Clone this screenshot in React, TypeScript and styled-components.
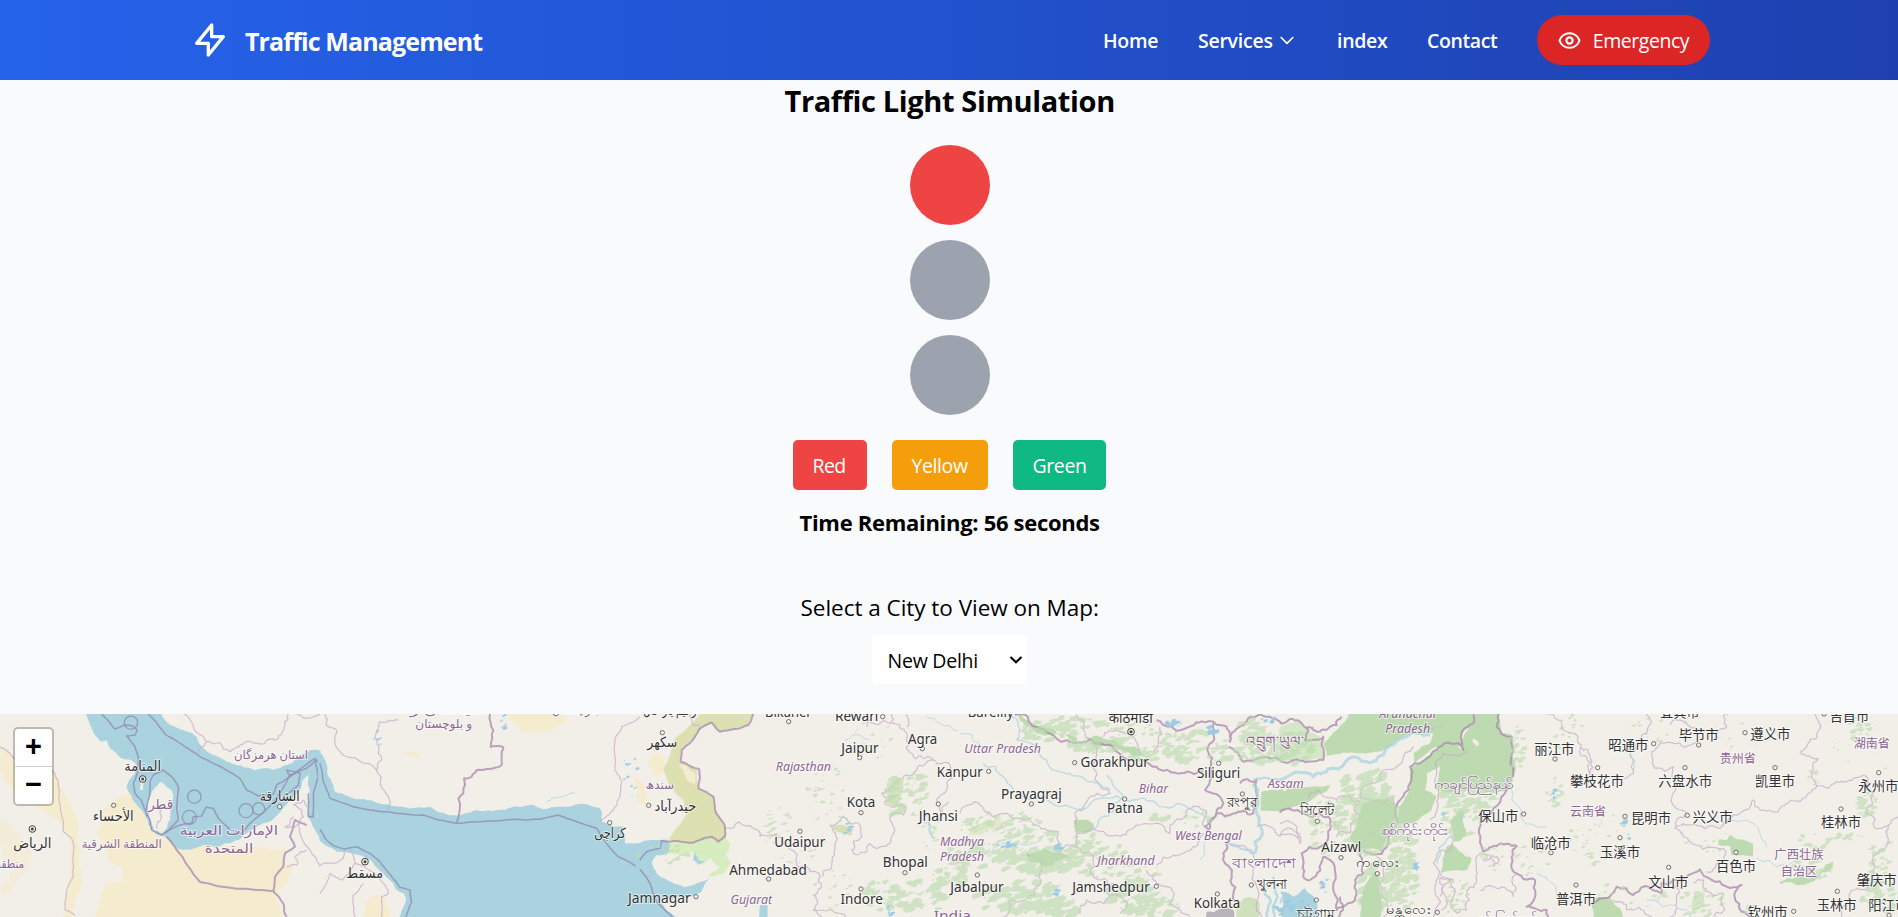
import React from "react";
import styled, { createGlobalStyle } from "styled-components";

const GlobalStyle = createGlobalStyle`
  *, *::before, *::after { box-sizing: border-box; }
  html { font-size: 20px; }
  body {
    margin: 0;
    height: 917px;
    overflow: hidden;
    background: #f9fafc;
    color: #000;
    font-family: "Open Sans", "Noto Sans", sans-serif;
  }
  h1, h2, p { margin: 0; }
`;

/* ---------- layout ---------- */

const Page = styled.div`
  display: flex;
  flex-direction: column;
  height: 917px;
`;

const Header = styled.header`
  height: 80px;
  flex: none;
  background: linear-gradient(to right, #2563eb, #1e40af);
  color: #fff;
`;

const HeaderInner = styled.div`
  width: 1600px;
  height: 100%;
  margin: 0 auto;
  padding: 0 39px 0 41px;
  display: flex;
  align-items: center;
  justify-content: space-between;
`;

const Brand = styled.div`
  display: flex;
  align-items: center;
  gap: 15px;
`;

const Fit = styled.span<{ $w: number; $ls: number }>`
  display: inline-block;
  width: ${(p) => p.$w}px;
  letter-spacing: ${(p) => p.$ls}px;
  white-space: nowrap;
`;

const BrandName = styled.h1`
  font-size: 25px;
  line-height: 35px;
  font-weight: 700;
  padding-top: 3px;
`;

const Nav = styled.nav`
  display: flex;
  align-items: center;
  gap: 40px;
`;

const NavLink = styled.a`
  display: flex;
  align-items: center;
  gap: 5px;
  font-size: 19.5px;
  line-height: 30px;
  font-weight: 600;
  color: #fff;

  span { padding-top: 2px; }
`;

const EmergencyButton = styled.button`
  display: flex;
  align-items: center;
  gap: 10px;
  height: 50px;
  padding: 0 20px;
  border: 0;
  border-radius: 25px;
  background: #dc2626;
  color: #fff;
  font: 400 19.5px/30px "Open Sans", sans-serif;

  span { padding-top: 2px; }
`;

const Main = styled.main`
  flex: 1;
  display: flex;
  flex-direction: column;
  align-items: center;
`;

const Title = styled.h2`
  margin-top: 1px;
  font-size: 29px;
  line-height: 40px;
  font-weight: 700;
`;

const Lights = styled.div`
  display: flex;
  flex-direction: column;
  gap: 15px;
  margin: 24px 0 25px;
  padding-left: 2px;
`;

const Light = styled.div<{ $color: string }>`
  width: 80px;
  height: 80px;
  border-radius: 50%;
  background: ${(p) => p.$color};
`;

const Buttons = styled.div`
  display: flex;
  gap: 25px;
`;

const ColorButton = styled.button<{ $color: string }>`
  height: 50px;
  padding: 2px 20px 0;
  border: 0;
  border-radius: 5px;
  background: ${(p) => p.$color};
  color: #fff;
  font: 400 19.5px/30px "Open Sans", sans-serif;
  text-align: left;
`;

const Timer = styled.p`
  margin-top: 15px;
  font-size: 22px;
  line-height: 35px;
  font-weight: 700;
`;

const CityLabel = styled.label`
  margin-top: 50px;
  font-size: 22.5px;
  line-height: 35px;
  font-weight: 500;
`;

const SelectBox = styled.div`
  position: relative;
  margin-top: 10px;
  width: 155px;
  height: 49px;
`;

const CitySelect = styled.select`
  appearance: none;
  width: 100%;
  height: 100%;
  padding: 2px 0 0 16px;
  border: 0;
  border-radius: 5px;
  background: #fff;
  color: #000;
  font: 400 19.5px "Open Sans", sans-serif;
  letter-spacing: -0.25px;
`;

const SelectArrow = styled.svg`
  position: absolute;
  right: 4px;
  top: 20px;
  pointer-events: none;
`;

const MapFrame = styled.section`
  position: relative;
  width: 100%;
  height: 203px;
  margin-top: auto;
  overflow: hidden;
  background: #f2efe9;
`;

const MapSvg = styled.svg`
  display: block;
`;

const ZoomControl = styled.div`
  position: absolute;
  left: 13px;
  top: 13px;
  width: 41px;
  height: 79px;
  display: flex;
  flex-direction: column;
  border: 2px solid rgba(0, 0, 0, 0.22);
  border-radius: 5px;
  background: #fff;
  background-clip: padding-box;
`;

const ZoomButton = styled.button`
  height: 37px;
  padding: 3px 0 0;
  border: 0;
  background: transparent;
  font: 700 29px/34px "Liberation Mono", monospace;
  color: #000;
  & + & { height: 38px; border-top: 1px solid #ccc; padding-top: 2px; }
`;

/* ---------- icons ---------- */

const Icon = ({ size, children }: { size: number; children: React.ReactNode }) => (
  <svg width={size} height={size} viewBox="0 0 24 24" fill="none" stroke="currentColor" strokeWidth={2} strokeLinecap="round" strokeLinejoin="round">
    {children}
  </svg>
);

/* ---------- map geometry (three units per pixel) ---------- */

type Pt = [number, number];

const random = (seed: number) => {
  let s = seed;
  return () => {
    s = (s * 16807) % 2147483647;
    return s / 2147483647;
  };
};

const parse = (s: string): Pt[] => s.trim().split(/\s+/).map((p) => p.split(",").map(Number) as Pt);

/* Fractal midpoint displacement turns a coarse polyline into a natural border. */
const rough = (src: string, amp: number, closed = false) => {
  let pts = parse(src);
  if (closed) pts = [...pts, pts[0]];
  const rnd = random(Math.round(Math.abs(pts[0][0] * 31 + pts[0][1] * 17) + pts.length * 101) + 7);
  for (let step = 0; step < 3; step++) {
    const next: Pt[] = [];
    for (let i = 0; i < pts.length - 1; i++) {
      const [x1, y1] = pts[i];
      const [x2, y2] = pts[i + 1];
      const len = Math.hypot(x2 - x1, y2 - y1);
      next.push(pts[i]);
      if (len > 9) {
        const d = (rnd() - 0.5) * len * amp;
        next.push([(x1 + x2) / 2 - ((y2 - y1) / len) * d, (y1 + y2) / 2 + ((x2 - x1) / len) * d]);
      }
    }
    next.push(pts[pts.length - 1]);
    pts = next;
  }
  return "M" + pts.map((p) => p[0].toFixed(1) + " " + p[1].toFixed(1)).join("L") + (closed ? "Z" : "");
};

const WATER = "#aad3df";
const GREEN = "#bddab1";
const SAND = "#f5ecd0";
const LAND = "#f2efe9";

const Area = ({ d, fill, amp = 0.3 }: { d: string; fill: string; amp?: number }) => <path d={rough(d, amp, true)} fill={fill} />;

const Border = ({ d, major, amp = 0.5 }: { d: string; major?: boolean; amp?: number }) => (
  <path d={rough(d, amp)} fill="none" stroke={major ? "#ad8fae" : "#c5adc8"} strokeOpacity={major ? 0.8 : 0.75} strokeWidth={major ? 6 : 3.6} strokeLinejoin="round" />
);

const SeaLine = ({ d }: { d: string }) => <path d={rough(d, 0.06)} fill="none" stroke="#9391b3" strokeWidth={4.5} strokeOpacity={0.85} strokeLinejoin="round" />;

const River = ({ d, w = 3 }: { d: string; w?: number }) => <path d={rough(d, 0.4)} fill="none" stroke={WATER} strokeWidth={w} strokeOpacity={0.75} />;

/* Small patches of woodland scattered inside an ellipse: cx, cy, rx, ry, count, size. */
type Patch = [number, number, number, number, number, number];

const scatter = ([cx, cy, rx, ry, n, size]: Patch) => {
  const rnd = random(cx * 13 + cy * 7 + n);
  let d = "";
  for (let i = 0; i < n; i++) {
    const a = rnd() * Math.PI * 2;
    const r = Math.sqrt(rnd());
    const x = cx + Math.cos(a) * r * rx;
    const y = cy + Math.sin(a) * r * ry;
    const s = size * (0.25 + rnd() * 0.9);
    for (let k = 0; k < 8; k++) {
      const t = (k / 8) * Math.PI * 2;
      const q = s * (0.4 + rnd() * 0.8);
      const px = x + Math.cos(t) * q * 1.5 + Math.sin(t) * q * 0.3;
      const py = y + Math.sin(t) * q * 0.75 - Math.cos(t) * q * 0.5;
      d += (k ? "L" : "M") + px.toFixed(1) + " " + py.toFixed(1);
    }
    d += "Z";
  }
  return d;
};

const woods: Patch[] = [
  [2480, 260, 60, 110, 40, 5], [2330, 350, 50, 60, 35, 6], [2620, 90, 60, 60, 25, 6], [2690, 260, 30, 60, 22, 12],
  [2750, 250, 35, 70, 40, 9], [2800, 370, 40, 60, 16, 6], [2400, 440, 60, 40, 16, 5], [2500, 540, 60, 60, 20, 5],
  [2650, 560, 70, 50, 35, 9], [2760, 560, 90, 45, 50, 13], [2850, 500, 60, 30, 30, 12], [2950, 430, 120, 40, 50, 12],
  [2940, 340, 80, 30, 36, 9], [3060, 340, 60, 30, 28, 8], [3080, 400, 110, 50, 50, 11], [3120, 450, 130, 40, 60, 17], [3060, 560, 130, 50, 70, 15],
  [3190, 590, 80, 30, 40, 15], [3260, 400, 50, 60, 30, 11], [3300, 450, 90, 60, 40, 10], [3400, 560, 80, 50, 50, 14], [3470, 590, 70, 30, 30, 13],
  [3420, 480, 60, 40, 24, 9], [3590, 320, 50, 30, 18, 7], [3480, 320, 25, 12, 10, 12], [3150, 60, 90, 30, 40, 12],
  [3300, 105, 90, 25, 40, 13], [3440, 130, 80, 22, 34, 11], [3580, 105, 110, 45, 60, 10], [3240, 40, 90, 20, 28, 10],
  [3400, 70, 90, 30, 30, 8], [3780, 110, 70, 50, 60, 12], [3880, 110, 60, 50, 60, 12], [3620, 150, 90, 18, 20, 10], [3750, 55, 40, 35, 30, 10],
  [3990, 380, 60, 60, 30, 8], [3980, 310, 60, 50, 34, 10], [4100, 240, 80, 60, 50, 16], [4130, 320, 80, 60, 60, 20], [4100, 390, 60, 50, 40, 17],
  [4120, 540, 40, 90, 50, 15], [4200, 450, 40, 120, 60, 14], [4200, 520, 50, 90, 50, 11], [4390, 320, 60, 60, 40, 12], [4370, 560, 40, 60, 24, 8],
  [4410, 250, 80, 60, 40, 15], [4550, 120, 25, 80, 30, 9], [4665, 245, 25, 45, 24, 7], [4710, 70, 50, 60, 24, 5], [4600, 440, 60, 60, 20, 6],
  [4480, 440, 40, 40, 20, 6], [4740, 390, 50, 60, 14, 6], [4800, 440, 60, 40, 12, 7], [4980, 60, 90, 50, 16, 5], [4840, 350, 60, 50, 14, 5],
  [5220, 60, 140, 60, 22, 4], [5120, 380, 80, 50, 14, 5], [5450, 390, 60, 30, 16, 8], [5550, 380, 40, 12, 12, 9], [5600, 280, 30, 40, 30, 9],
  [5430, 480, 70, 30, 26, 9], [5650, 460, 40, 80, 30, 9], [5640, 560, 60, 50, 40, 11], [5580, 60, 30, 50, 22, 9], [5440, 190, 20, 40, 14, 5],
  [4870, 560, 130, 40, 20, 7], [5100, 580, 70, 40, 22, 8], [5260, 600, 30, 20, 10, 8], [5590, 150, 110, 90, 14, 4], [2000, 430, 90, 30, 22, 8],
];

const lakes: Patch[] = [
  [3520, 40, 30, 10, 12, 9], [3640, 60, 16, 16, 9, 8], [3805, 30, 25, 8, 8, 8], [3020, 405, 30, 8, 10, 7], [3175, 410, 15, 12, 8, 7],
  [3170, 545, 12, 12, 6, 7], [2670, 595, 12, 22, 7, 6], [2550, 360, 14, 24, 8, 7], [3975, 525, 12, 25, 8, 6], [4250, 470, 5, 12, 5, 8],
  [4330, 305, 4, 12, 4, 6], [4120, 365, 3, 8, 3, 5], [4662, 248, 4, 18, 5, 6], [4873, 340, 4, 10, 5, 7], [4890, 375, 4, 14, 5, 6],
  [1500, 34, 30, 24, 5, 6], [1135, 90, 14, 26, 6, 5], [1890, 180, 25, 90, 9, 7], [4300, 50, 30, 8, 6, 6], [3870, 590, 50, 25, 20, 9],
];

const Terrain = () => (
  <>
    <g id="gulf">
      <Area fill={SAND} d="0,110 50,155 165,190 195,250 235,330 240,420 245,500 230,560 220,640 190,640 212,500 215,400 180,340 130,300 50,250 0,180" amp={0.2} />
      <Area fill={SAND} d="340,275 385,250 420,290 445,345 490,385 525,412 610,405 700,410 840,420 860,410 850,460 880,470 860,520 830,545 850,680 280,680 300,570 320,515 365,515 365,470 330,460 290,370 310,300" amp={0.12} />
      <Area fill="#f3ecd8" d="0,330 60,370 100,440 60,500 10,560 0,540 40,470 0,400" />
      <Area
        fill={WATER}
        d="240,-20 258,12 270,45 285,75 302,95 320,90 328,112 347,127 365,145 400,155 415,175 402,195 387,210 380,230 395,260 415,290 432,312 445,345 465,370 490,378 510,395 525,412 570,420 610,405 650,412 700,395 740,370 780,345 830,318 845,300 870,272 900,240 905,215 925,195 930,240 925,280 925,320 945,360 962,385 962,122 930,120 900,135 860,165 820,180 760,180 710,165 680,155 640,135 605,110 590,80 550,60 510,45 485,12 475,-20"
        amp={0.18}
      />
      <Area fill={LAND} d="468,230 485,215 500,230 516,242 514,290 510,330 500,355 485,370 462,360 450,330 443,300 445,270 455,245" amp={0.2} />
      <Area fill={LAND} d="418,212 431,220 430,240 420,238" />
      <Area fill={LAND} d="760,160 800,152 835,160 800,172" />
      <g fill="none" stroke="#9391b3" strokeWidth={4} strokeOpacity={0.85}>
        <circle cx="393" cy="38" r="20" />
        <circle cx="583" cy="260" r="20" />
        <circle cx="568" cy="322" r="21" />
        <circle cx="738" cy="302" r="21" />
        <circle cx="776" cy="296" r="18" />
      </g>
      <SeaLine d="305,12 345,57 372,45 400,48 412,60 405,75 380,78 405,110 415,140 412,190 400,220 405,250 425,272 435,300 450,330 455,360 485,375 505,362 540,345 575,340 580,320 605,318 618,292 640,295 655,325 690,360 725,370 750,340 790,308 830,265 870,195 920,175 948,150" />
      <SeaLine d="445,12 495,72 540,100 600,140 640,160 720,205 740,240 775,258 820,252 830,225 870,200 910,170 945,145 962,165" />
      <SeaLine d="450,215 460,195 490,180 520,205 535,230 530,300 535,330 495,370" />
      <SeaLine d="450,215 448,260 440,290 440,320" />
      <SeaLine d="870,200 860,180 900,190 895,225 850,260" />
      <SeaLine d="945,150 955,200 940,250 940,320 925,320 925,250" />
      <Border major d="500,380 530,420 600,516 820,544 825,500 850,470 855,430 885,410 870,380 885,330 920,345" amp={0.08} />
      <Border major d="820,544 850,580 860,621" amp={0.2} />
      <Border d="0,112 40,145 165,190 175,230 185,315 190,365 215,385 220,500 195,600 225,615" amp={0.2} />
      <Border d="550,12 580,50 620,95 595,130" amp={0.3} />
      <Border d="620,95 690,125 720,105 800,90 835,85 850,60 865,12" />
      <Border d="880,320 855,350 900,340 905,300 880,285 910,270 925,295" />
      <Border d="895,340 900,370 930,420 960,470" amp={0.2} />
      <Border d="860,470 890,465 885,440 920,420" />
      <Border d="470,290 485,320 470,355" />
      <Border d="890,12 915,25 960,12" amp={0.2} />
    </g>
    <g id="arabian-sea" transform="translate(960)">
      <Area fill={SAND} d="560,-10 745,-10 745,12 735,40 690,62 640,70 600,60 565,25" amp={0.15} />
      <Area fill={SAND} d="258,125 300,132 300,145 262,136" />
      <Area
        fill={WATER}
        d="-2,125 15,150 22,190 40,225 45,245 90,262 110,268 150,270 185,282 240,290 300,292 330,290 385,315 430,312 470,300 530,300 580,290 640,285 680,297 740,290 800,283 840,295 845,335 870,345 910,350 915,400 962,400 1000,800 238,800 238,621 250,590 258,570 250,550 225,535 215,515 190,490 160,460 130,440 90,430 50,425 15,405 -2,390 -2,300 -2,210"
        amp={0.18}
      />
      <path d="M-6 140H4V375H-6ZM940 412H970V640H940Z" fill={WATER} />
      <Area fill={SAND} d="160,555 190,560 210,600 212,640 130,640 140,575" amp={0.2} />
      <Area fill={SAND} d="945,200 960,215 960,280 950,250" />
      <SeaLine d="0,160 10,215 30,265 100,290 200,305 310,315 405,340 480,335 530,333 660,328 712,315 830,355 855,395 895,440 948,468 962,450" />
      <SeaLine d="0,358 15,385 40,407 75,417 110,410 150,430 180,455 215,500 240,532 270,540 275,575 255,625" />
      <Border major d="510,12 512,110 550,112 545,165 470,180 455,200 432,205 430,250 415,265 408,338" amp={0.25} />
      <Border d="15,12 18,45 50,60 45,90 60,125 170,180 185,230 205,260 205,300" amp={0.3} />
      <Border d="170,180 185,150 178,110 180,35 235,30" amp={0.35} />
      <Border d="960,20 905,50 885,90 885,180 905,215 900,260 870,310 840,335" amp={0.2} />
      <Border d="0,465 40,460 70,445 75,420" amp={0.2} />
      <Border d="92,418 105,460 68,510 30,490 0,550" amp={0.15} />
      <Border d="105,460 190,520 205,550 185,560 185,621" amp={0.2} />
      <Border d="130,520 100,555 105,621" amp={0.15} />
      <River d="680,275 720,260 765,250" />
    </g>
    <g id="west-india" transform="translate(1920)">
      <Area fill={SAND} d="30,140 60,130 75,160 65,195 40,195 25,170" />
      <Area fill={SAND} d="0,215 15,240 20,280 0,285" />
      <Area fill="#d5edbf" d="70,392 250,378 270,400 258,432 272,455 250,492 200,505 240,472 210,445 190,462 165,450 160,425 110,432 80,430" amp={0.2} />
      <Area
        fill="#dde0b1"
        d="205,-10 345,-10 340,12 325,45 240,65 215,38 180,55 165,80 125,120 122,155 170,180 175,235 220,260 225,300 255,350 255,385 230,395 215,380 160,398 85,388 105,360 140,310 130,270 85,220 70,175 95,115 110,80 150,45"
        amp={0.12}
      />
      <Area fill={SAND} d="108,160 165,190 170,235 140,210" />
      <Area fill={WATER} d="-4,400 40,390 80,388 90,405 85,430 50,435 35,460 50,490 80,510 130,530 170,520 208,505 185,545 160,558 110,562 60,572 80,600 112,625 112,700 -20,700 -20,600 -10,500" amp={0.18} />
      <Area fill={WATER} d="360,585 385,588 380,640 355,640" amp={0.15} />
      <Area fill={WATER} d="160,430 175,450 195,455 175,465 160,450" />
      <SeaLine d="0,450 20,425 60,415 65,390" />
      <SeaLine d="0,478 30,520 50,575 100,625" />
      <Border major d="340,12 325,45 240,65 215,38 180,55 165,80 125,120 122,155 178,178 175,235 220,260 225,300 255,350 255,380 235,395 215,380 160,398 65,392" amp={0.12} />
      <Border d="180,50 150,12" />
      <Border d="255,355 340,355 390,375 420,380 455,420 470,465 510,485 540,500 545,530 520,555 520,600 545,621" amp={0.6} />
      <Border d="545,500 575,470 585,400 570,345 610,320 625,335 660,345 665,380 635,420 650,435 690,400 750,400 760,370 750,320 790,315 795,290 740,285 725,250 770,210 830,180 880,150 930,165" amp={0.5} />
      <Border d="680,50 690,30 750,40 755,12" amp={0.6} />
      <Border d="755,40 795,65 800,110 830,145 880,150" amp={0.6} />
      <Border d="800,12 800,50" />
      <Border d="930,165 920,240 890,270 905,310 925,275" amp={0.6} />
      <Border d="520,600 620,625" />
      <Area fill="#d5e2bd" d="740,270 760,220 790,205 785,250 765,290 745,290" />
      <Area fill="#d7dfb9" d="575,350 640,350 635,375 600,368" />
      <River d="860,20 900,40 955,65" />
      <River d="615,90 660,75 690,90" />
      <River d="865,330 870,370 885,385" w={6} />
    </g>
    <g id="gangetic-plain" transform="translate(2880)">
      <Area fill="#e2e8cb" d="20,375 60,340 120,320 130,345 70,370" />
      <Area fill={GREEN} d="345,330 400,340 395,365 350,365" />
      <Area fill={GREEN} d="200,428 300,425 330,445 260,470 210,455" />
      <Area fill={GREEN} d="165,12 200,30 260,55 350,80 350,95 270,75 190,40" />
      <Area fill={GREEN} d="385,85 450,90 520,110 560,140 500,125 420,110" />
      <Area fill={GREEN} d="905,245 970,238 970,305 900,300" amp={0.15} />
      <Area fill="#cfe0bd" d="830,580 870,560 900,580 890,640 820,640" />
      <Area fill="#b7b3bb" d="740,605 820,600 830,640 735,640" />
      <Border major d="165,15 230,50 295,90 350,98 385,90 450,105 510,150 590,170 650,190 710,190 730,185" amp={0.4} />
      <Border major d="590,30 610,45 690,50 730,35 760,35 800,50 810,95 840,50 870,20 930,20 962,40" amp={0.4} />
      <Border major d="760,40 745,110 755,180 735,240 790,280 770,300 735,350 745,360 770,310 820,310" amp={0.4} />
      <Border major d="805,110 850,155 962,150" amp={0.4} />
      <Border major d="820,310 880,310 890,250 890,210 840,220" amp={0.5} />
      <Border major d="805,390 790,430 815,490 825,575" amp={0.5} />
      <Border d="350,12 370,60 395,95 410,150 405,210 450,250 380,275 345,310 350,370 440,375 480,380 540,345 630,370 640,340 690,295 735,300 730,350" amp={0.5} />
      <Border d="0,310 60,285 100,320 180,325 230,345 295,365 295,425 350,410 350,370" amp={0.5} />
      <Border d="350,410 400,460 400,500 460,520 440,545 500,575 480,610" amp={0.6} />
      <Border d="200,430 245,480 230,530 150,570 130,621" amp={0.6} />
      <Border d="590,465 640,435 700,410 730,370" amp={0.6} />
      <Border d="560,480 590,520 640,560 640,590 690,621" amp={0.6} />
      <Border d="360,610 380,570 480,560" amp={0.6} />
      <Border d="800,400 880,430 890,530 905,621" amp={0.4} />
      <Border d="600,50 595,95 580,125" />
      <Border d="430,80 470,60 540,130" />
      <Border d="890,350 930,350 962,380" />
      <River d="0,70 60,105 80,125" />
      <River d="150,12 170,90 260,150 330,190 400,215 450,240" w={4} />
      <River d="70,160 130,200 200,265 300,290 420,265 520,270 600,290 700,300 735,320" w={4} />
      <River d="400,360 460,305 490,260 440,195" w={4} />
      <River d="880,220 890,310 885,430" w={9} />
      <River d="880,210 962,215" w={6} />
      <River d="800,400 840,415 885,430" w={6} />
      <River d="735,320 740,370 720,450" />
      <River d="250,375 130,400 90,430" />
      <River d="905,540 930,580 920,621" w={8} />
      <River d="940,500 945,621" w={8} />
    </g>
    <g id="eastern-hills" transform="translate(3840)">
      <Area fill={GREEN} d="210,-20 575,-20 580,40 545,70 545,110 470,110 400,165 400,130 450,100 460,70 380,75 340,100 300,125 240,130 140,137 130,100 170,60 205,20" amp={0.15} />
      <Area fill={GREEN} d="585,-20 655,-20 665,70 695,75 708,180 690,240 640,250 590,235 540,245 470,240 480,170 440,190 435,240 470,260 455,300 400,340 350,340 360,290 385,250 390,175 440,140 510,100 545,120 555,70" amp={0.15} />
      <Area fill={GREEN} d="-4,250 60,230 150,225 140,245 80,280 -4,305" amp={0.15} />
      <Area fill={GREEN} d="250,280 340,275 350,310 335,370 305,430 240,415 210,385 235,330" />
      <Area fill={GREEN} d="500,410 520,402 540,425 575,445 560,480 480,488" amp={0.2} />
      <Area fill={GREEN} d="520,320 550,300 555,380 525,395 515,360" />
      <Area fill={GREEN} d="265,510 295,480 300,640 235,640" amp={0.2} />
      <Area fill="#d5e8c5" d="0,50 60,35 85,60 120,80 130,145 0,150" amp={0.15} />
      <Area fill={WATER} d="0,545 40,560 75,535 110,580 120,640 0,640" amp={0.25} />
      <Area fill={LAND} d="580,85 598,102 590,110 578,95" />
      <Border major d="0,40 60,35 85,60 75,90 130,80 130,150 60,152 0,152" amp={0.35} />
      <Border major d="80,55 110,65 150,50 170,45 185,20" amp={0.5} />
      <Border major d="580,12 580,40 545,70 550,120 535,100 480,110 440,145 390,170 385,240 350,290 350,340 325,390 305,432 250,420" amp={0.3} />
      <Border major d="655,12 650,50 665,72 695,80 700,190 680,240 610,320 600,350 610,425" amp={0.3} />
      <Border major d="610,425 650,408 710,408 695,440 710,490 765,510 740,590 800,600 805,621" amp={0.4} />
      <Border major d="0,308 60,305 90,320 145,320 145,380 120,410 65,430 70,500 90,510 130,440 150,450 160,540 170,600 225,570 225,510 250,490 240,430" amp={0.4} />
      <Border d="400,110 310,180 300,210 240,265 280,275 340,265 350,290" amp={0.4} />
      <Border d="85,265 110,240 170,270 210,260 240,275 235,330 210,370 170,380 150,330" amp={0.6} />
      <Border d="560,125 490,130 470,180 465,220 475,260 465,320 450,330" amp={0.4} />
      <Border d="290,440 300,520 310,621" />
      <Border d="515,375 515,410 460,460 465,530 460,621" />
      <Border d="480,490 520,560 530,610 560,600 560,540 590,510 600,430" amp={0.6} />
      <Border d="480,560 520,510 480,505 485,600" amp={0.6} />
      <Border d="600,540 640,530 700,560 715,490" amp={0.6} />
      <Border d="0,340 45,345 60,400 0,375" />
      <Border d="0,375 40,360 60,385" />
      <Border d="800,12 850,60 880,70 900,130 930,155 930,190" amp={0.5} />
      <Border d="610,430 640,470 650,440 610,450" amp={0.7} />
      <Border d="180,560 175,621" major />
      <River d="0,210 100,200 160,175 260,155 310,135 380,80 450,75" w={9} />
      <River d="540,310 510,380 470,460" w={4} />
      <River d="640,240 690,210 720,320 760,345 800,350" />
      <River d="770,490 820,520 830,560" />
      <River d="0,580 20,555 40,600" w={6} />
    </g>
    <g id="south-china" transform="translate(4740)">
      <Area fill={GREEN} d="415,390 440,390 450,375 470,388 500,392 520,400 518,440 455,435 450,408 415,405" amp={0.15} />
      <Area fill={GREEN} d="45,565 90,565 120,595 130,640 40,640 35,590" amp={0.2} />
      <Area fill={GREEN} d="600,515 700,505 735,465 760,455 755,475 700,515 650,525 600,522" />
      <Area fill="#d2e5c5" d="340,545 375,550 370,590 335,605" />
      <Border major d="35,585 90,560 110,530 160,555 190,530 245,550 245,520 290,510 360,478 395,510 485,525 465,565 485,605 510,621" amp={0.35} />
      <Border d="200,12 205,50 185,75 150,120 160,190 130,205" amp={0.5} />
      <Border d="350,98 280,100 240,95 215,125 225,175 280,170 285,230 275,265 320,310 285,355 310,380 350,405 430,415 430,450 380,485" amp={0.45} />
      <Border d="290,350 330,345 420,355 480,310 520,270 540,300 595,305 635,270 680,260 710,230 745,235 800,215 860,200 875,245 855,310 885,325 885,355 925,345 925,385 880,460 860,540 810,550 785,620" amp={0.45} />
      <Border d="710,230 700,180 715,145 660,128 710,85 705,12" amp={0.5} />
      <Border d="925,345 954,320" />
      <Border d="270,45 300,30 330,50 380,60 440,50 435,12" amp={0.6} />
      <Border d="100,570 140,600 190,600 215,621" amp={0.6} />
      <Border d="280,520 290,580 270,621" amp={0.6} />
      <Border d="340,520 370,510 380,545 430,550 435,600 400,621" amp={0.6} />
      <Border d="0,112 30,145 30,200" amp={0.6} />
      <River d="200,570 250,590 320,600 330,621" />
      <River d="430,350 500,330 540,370 560,410" />
      <River d="530,445 590,470 700,475" />
      <River d="150,130 160,180" />
    </g>
  </>
);

type Kind = "city" | "state" | "region" | "country";
type Label = [string, number, number, number, Kind?];

const labels: Label[] = [
  ["المنامة", 428, 183, 110], ["الأحساء", 340, 333, 122], ["الرياض", 97, 413, 115],
  ["قطر", 482, 297, 75, "country"], ["منطقة", 30, 475, 85, "region"], ["المنطقة الشرقية", 365, 413, 240, "region"],
  ["استان هرمزگان", 813, 146, 222, "region"], ["الشارقة", 839, 273, 120], ["الإمارات العربية", 687, 374, 295, "country"], ["المتحدة", 687, 430, 145, "country"],
  ["سیستان و", 1345, 13, 230, "region"], ["و بلوچستان", 1331, 53, 170, "region"], ["بلوچستان", 1725, 12, 140, "region"],
  ["کراچی", 1830, 385, 95], ["مسقط", 1094, 505, 110], ["رحیم یار خان", 2010, 14, 160],
  ["سکھر", 1987, 112, 90], ["سندھ", 1980, 238, 85, "region"], ["حیدرآباد", 2026, 303, 125],
  ["Bikaner", 2365, 20, 140], ["Rewari", 2570, 32, 130], ["Jaipur", 2580, 128, 112], ["Agra", 2768, 102, 88], ["Rajasthan", 2410, 182, 165, "state"],
  ["Kanpur", 2879, 201, 138], ["Kota", 2583, 292, 86], ["Jhansi", 2815, 333, 118], ["Udaipur", 2399, 410, 153], ["Ahmedabad", 2304, 494, 233],
  ["Bhopal", 2716, 472, 135], ["Indore", 2585, 583, 127], ["Gujarat", 2254, 582, 125, "state"], ["Jamnagar", 1978, 578, 188],
  ["Madhya", 2886, 409, 132, "state"], ["Pradesh", 2886, 453, 132, "state"], ["Jabalpur", 2931, 546, 160], ["India", 2857, 634, 112, "country"],
  ["Bareilly", 2972, 20, 138], ["Uttar Pradesh", 3008, 130, 230, "state"], ["Gorakhpur", 3344, 172, 205], ["Prayagraj", 3094, 267, 182], ["Patna", 3375, 310, 108],
  ["Bihar", 3460, 249, 88, "state"], ["Siliguri", 3656, 205, 130], ["রংপুর", 3727, 292, 95], ["West Bengal", 3625, 390, 200, "state"],
  ["Jharkhand", 3378, 465, 172, "state"], ["Jamshedpur", 3333, 546, 233], ["Kolkata", 3651, 594, 140], ["বাংলাদেশ", 3792, 475, 190, "country"],
  ["খুলনা", 3817, 538, 90], ["काठमाडौं", 3392, 40, 132], ["नेपाल", 3210, 13, 84, "country"], ["འབྲུག་ཡུལ་", 3825, 108, 175, "country"], ["Assam", 3857, 235, 108, "state"],
  ["Arunachal", 4223, 25, 170, "state"], ["Pradesh", 4223, 70, 135, "state"], ["ကချင်ပြည်နယ်", 4420, 238, 235, "region"], ["সিলেট", 3952, 315, 105],
  ["စစ်ကိုင်းတိုင်း", 4245, 375, 205, "region"], ["Aizawl", 4024, 426, 120], ["ကလေး", 4133, 472, 130], ["မန္တလေး", 4225, 612, 135], ["চট্টগ্রাম", 3947, 628, 115],
  ["ရှမ်းပြည်နယ်", 4520, 640, 180, "region"], ["丽江市", 4663, 133, 120], ["攀枝花市", 4791, 228, 162], ["保山市", 4495, 333, 120], ["云南省", 4764, 318, 108, "region"],
  ["临沧市", 4652, 413, 120], ["普洱市", 4728, 582, 120], ["宜宾市", 5040, 20, 118], ["毕节市", 5096, 91, 120], ["遵义市", 5311, 88, 120],
  ["昭通市", 4885, 120, 120], ["贵州省", 5213, 158, 108, "region"], ["六盘水市", 5056, 228, 162], ["凯里市", 5325, 228, 120], ["永州市", 5635, 244, 120],
  ["湖南省", 5615, 113, 108, "region"], ["吉首市", 5548, 33, 118], ["昆明市", 4953, 340, 120], ["兴义市", 5138, 335, 120], ["玉溪市", 4860, 440, 120],
  ["文山市", 5005, 530, 120], ["百色市", 5208, 482, 120], ["广西壮族", 5397, 446, 148, "region"], ["自治区", 5397, 497, 110, "region"],
  ["桂林市", 5523, 352, 120], ["肇庆市", 5630, 525, 120], ["玉林市", 5510, 600, 120], ["阳江市", 5665, 600, 120], ["钦州市", 5303, 622, 120],
];

const capitals: Pt[] = [[428, 207], [97, 357], [1095, 455], [3393, 65]];

const dots: Pt[] = [
  [341, 286], [839, 290], [1829, 338], [1987, 68], [1946, 286], [2366, 35], [2648, 20], [2579, 143], [2767, 116], [2966, 184], [2583, 308], [2815, 282],
  [2400, 364], [2306, 507], [2715, 488], [2583, 537], [2088, 560], [2932, 495], [3224, 158], [3094, 282], [3374, 267], [3656, 160], [3727, 252],
  [3469, 529], [3652, 552], [3754, 525], [3952, 334], [4023, 443], [4132, 491], [4312, 607], [3949, 570], [4665, 147], [4793, 173], [4571, 312],
  [4653, 428], [4728, 525], [5096, 105], [5235, 68], [4961, 101], [5055, 173], [5325, 173], [5636, 188], [5472, 12], [4875, 319], [5062, 316],
  [4860, 383], [5006, 472], [5208, 427], [5523, 297], [5512, 544], [5667, 616], [5381, 604],
];

const MapLabel = styled.text<{ $kind: Kind }>`
  font-family: "Noto Sans", "Noto Sans CJK SC", "DejaVu Sans", sans-serif;
  font-size: ${(p) => (p.$kind === "city" ? 42 : p.$kind === "country" ? 41 : 37)}px;
  font-style: ${(p) => (p.$kind === "state" ? "italic" : "normal")};
  font-weight: 400;
  fill: ${(p) => (p.$kind === "city" ? "#333" : "#8d6593")};
  stroke: rgba(255, 255, 255, 0.6);
  stroke-width: 6px;
  stroke-linejoin: round;
  paint-order: stroke;
  text-anchor: middle;
`;

const CityMap = () => (
  <MapSvg width="1898" height="203" viewBox="0 12 5694 609">
    <Terrain />
    <path d={woods.map(scatter).join("")} fill={GREEN} fillOpacity={0.65} />
    <path d={lakes.map(scatter).join("")} fill="#9ccbe4" />
    <g fill={LAND} stroke="#555" strokeWidth={2.4}>
      {dots.map(([x, y]) => (
        <circle key={x + "-" + y} cx={x} cy={y} r={6.5} />
      ))}
    </g>
    {capitals.map(([x, y]) => (
      <g key={x}>
        <circle cx={x} cy={y} r={10} fill={LAND} stroke="#444" strokeWidth={3} />
        <circle cx={x} cy={y} r={4.5} fill="#444" />
      </g>
    ))}
    {labels.map(([text, x, y, w, kind = "city"]) => (
      <MapLabel key={text + x + y} $kind={kind} x={x} y={y} textLength={w} lengthAdjust="spacingAndGlyphs">
        {text}
      </MapLabel>
    ))}
  </MapSvg>
);

export default function App() {
  return (
    <Page>
      <GlobalStyle />
      <Header>
        <HeaderInner>
          <Brand>
            <Icon size={40}>
              <path d="M13 10V3L4 14h7v7l9-11h-7z" />
            </Icon>
            <BrandName><Fit $w={238} $ls={-0.87}>Traffic Management</Fit></BrandName>
          </Brand>
          <Nav>
            <NavLink><Fit $w={55} $ls={-0.3}>Home</Fit></NavLink>
            <NavLink>
              <Fit $w={74} $ls={-0.25}>Services</Fit>
              <Icon size={20}><path d="M19 9l-7 7-7-7" /></Icon>
            </NavLink>
            <NavLink><Fit $w={50} $ls={-0.3}>index</Fit></NavLink>
            <NavLink><Fit $w={70} $ls={-0.4}>Contact</Fit></NavLink>
            <EmergencyButton>
              <Icon size={25}>
                <path d="M15 12a3 3 0 11-6 0 3 3 0 016 0z" />
                <path d="M2.458 12C3.732 7.943 7.523 5 12 5c4.478 0 8.268 2.943 9.542 7-1.274 4.057-5.064 7-9.542 7-4.477 0-8.268-2.943-9.542-7z" />
              </Icon>
              <Fit $w={98} $ls={-0.45}>Emergency</Fit>
            </EmergencyButton>
          </Nav>
        </HeaderInner>
      </Header>
      <Main>
        <Title><Fit $w={329} $ls={-0.37}>Traffic Light Simulation</Fit></Title>
        <Lights>
          <Light $color="#ef4444" />
          <Light $color="#9ca3af" />
          <Light $color="#9ca3af" />
        </Lights>
        <Buttons>
          <ColorButton $color="#ef4444"><Fit $w={34} $ls={-0.6}>Red</Fit></ColorButton>
          <ColorButton $color="#f59e0b"><Fit $w={56} $ls={-0.4}>Yellow</Fit></ColorButton>
          <ColorButton $color="#10b981"><Fit $w={53} $ls={-0.4}>Green</Fit></ColorButton>
        </Buttons>
        <Timer><Fit $w={299} $ls={-0.3}>Time Remaining: 56 seconds</Fit></Timer>
        <CityLabel htmlFor="city"><Fit $w={297} $ls={-0.03}>Select a City to View on Map:</Fit></CityLabel>
        <SelectBox>
          <CitySelect id="city" defaultValue="New Delhi">
            <option>New Delhi</option>
          </CitySelect>
          <SelectArrow width="14" height="10" viewBox="0 0 14 10" fill="none" stroke="#000" strokeWidth="2.2">
            <path d="M1.5 2l5.5 5.2L12.5 2" />
          </SelectArrow>
        </SelectBox>
        <MapFrame>
          <CityMap />
          <ZoomControl>
            <ZoomButton>+</ZoomButton>
            <ZoomButton>−</ZoomButton>
          </ZoomControl>
        </MapFrame>
      </Main>
    </Page>
  );
}
